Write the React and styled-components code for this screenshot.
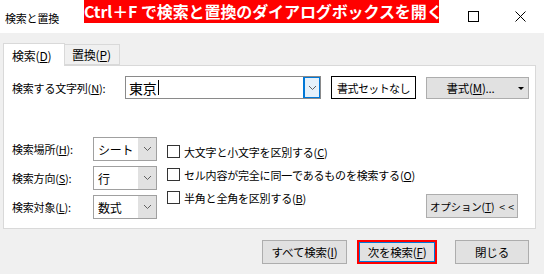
import { Fragment } from "react";
import styled, { createGlobalStyle } from "styled-components";

const GlobalStyle = createGlobalStyle`
  body {
    margin: 0;
    background: #f0f0f0;
    font-family: "Noto Sans CJK JP", "Noto Sans", sans-serif;
    color: #000;
  }
`;

const Window = styled.div`
  width: 544px;
  height: 274px;
  display: flex;
  flex-direction: column;
  background: #f0f0f0;
  font-size: 11px;
  letter-spacing: -0.2px;
  overflow: hidden;
`;

const TitleBar = styled.div`
  height: 33px;
  background: #fff;
  display: flex;
  align-items: center;
  padding-left: 5px;
`;

const Title = styled.div`
  font-size: 11px;
  padding-top: 2px;
`;

const Banner = styled.div`
  align-self: flex-start;
  margin-left: 25px;
  height: 23px;
  width: 355px;
  background: #ff0000;
  color: #fff;
  font-weight: bold;
  font-size: 16px;
  line-height: 23px;
  text-align: center;
  white-space: nowrap;
  letter-spacing: -0.1px;
`;

const Controls = styled.div`
  margin-left: auto;
  display: flex;
  align-items: center;
  gap: 36px;
  padding-right: 18px;
`;

const Body = styled.div`
  padding: 9px 8px 0 3px;
  display: flex;
  flex-direction: column;
`;

const Tabs = styled.div`
  display: flex;
  align-items: flex-end;
  height: 23px;
`;

const Tab = styled.div`
  height: ${(p) => (p.$active ? "23px" : "21px")};
  padding: 0 ${(p) => (p.$active ? "8px" : "7px")};
  width: ${(p) => p.$w}px;
  box-sizing: border-box;
  background: ${(p) => (p.$active ? "#fff" : "#f0f0f0")};
  border: 1px solid #d9d9d9;
  border-bottom: ${(p) => (p.$active ? "none" : "1px solid #d9d9d9")};
  border-left: ${(p) => (p.$active ? "1px solid #d9d9d9" : "none")};
  display: flex;
  align-items: center;
  position: relative;
  z-index: ${(p) => (p.$active ? 1 : 0)};
  margin-bottom: ${(p) => (p.$active ? "-1px" : "0")};
  font-size: 12px;
`;

const Panel = styled.div`
  height: 164px;
  box-sizing: border-box;
  border: 1px solid #d9d9d9;
  background: #fff;
  padding: 10px 1px 9px 8px;
  display: flex;
  flex-direction: column;
`;

const Row = styled.div`
  display: flex;
  align-items: center;
  height: 23px;
`;

const Label = styled.span`
  width: ${(p) => p.$w}px;
  white-space: nowrap;
  flex-shrink: 0;
`;

const Combo = styled.div`
  width: ${(p) => p.$w}px;
  height: ${(p) => p.$h}px;
  box-sizing: border-box;
  border: 1px solid ${(p) => p.$border || "#a0a0a0"};
  display: flex;
  background: #fff;
  flex-shrink: 0;
`;

const ComboText = styled.div`
  flex: 1;
  display: flex;
  align-items: center;
  padding-left: ${(p) => p.$pad || 4}px;
  font-size: ${(p) => p.$size || 12}px;
`;

const Caret = styled.span`
  display: inline-block;
  width: 1px;
  height: 15px;
  background: #000;
  margin-left: 1px;
`;

const DropBtn = styled.div`
  width: ${(p) => p.$w}px;
  display: flex;
  align-items: center;
  justify-content: center;
  background: ${(p) => (p.$focus ? "#e5f1fb" : "#e1e1e1")};
  border-left: 1px solid ${(p) => (p.$focus ? "#0078d7" : "#e1e1e1")};
  box-shadow: ${(p) => (p.$focus ? "inset 0 0 0 1px #0078d7" : "none")};
`;

const Button = styled.div`
  width: ${(p) => p.$w}px;
  height: ${(p) => p.$h || 24}px;
  box-sizing: border-box;
  margin-left: ${(p) => p.$ml || 0}px;
  border: 1px solid #adadad;
  background: #e1e1e1;
  display: flex;
  align-items: center;
  justify-content: center;
  white-space: nowrap;
  flex-shrink: 0;
  position: relative;
  font-size: ${(p) => p.$size || 11.5}px;
`;

const PlainButton = styled(Button)`
  border: 1px solid #000;
  background: #fff;
  letter-spacing: -0.6px;
`;

const HighlightButton = styled(Button)`
  border: 2px solid #ff0000;
  box-shadow: inset 0 0 0 1px #0078d7;
`;

const SmallArrow = styled.span`
  position: absolute;
  right: 4px;
  top: 9px;
  width: 0;
  height: 0;
  border-left: 3px solid transparent;
  border-right: 3px solid transparent;
  border-top: 3px solid #000;
`;

const Lower = styled.div`
  margin-top: 38px;
  display: flex;
  align-items: flex-start;
`;

const FieldGrid = styled.div`
  display: grid;
  grid-template-columns: 81px 64px;
  row-gap: 5px;
  align-items: center;
`;

const Checks = styled.div`
  margin-left: 10px;
  margin-top: 3px;
  display: flex;
  flex-direction: column;
`;

const CheckRow = styled.label`
  display: flex;
  align-items: center;
  height: 23px;
  gap: 4px;
  white-space: nowrap;
`;

const Box = styled.span`
  width: 13px;
  height: 13px;
  box-sizing: border-box;
  border: 1px solid #333;
  background: #fff;
`;

const OptionsWrap = styled.div`
  margin-left: auto;
  align-self: flex-end;
  margin-right: 16px;
  margin-bottom: 1px;
`;

const Collapse = styled.span`
  margin-left: ${(p) => p.$ml}px;
  letter-spacing: 0;
`;

const Footer = styled.div`
  display: flex;
  justify-content: flex-end;
  margin-top: 11px;
  padding-right: 7px;
`;

const Chevron = () => (
  <svg width="9" height="6" viewBox="0 0 9 6">
    <polyline points="1,1 4.5,4.5 8,1" fill="none" stroke="#606060" strokeWidth="1" />
  </svg>
);

const fields = [
  { label: "検索場所", key: "H", value: "シート" },
  { label: "検索方向", key: "S", value: "行" },
  { label: "検索対象", key: "L", value: "数式" },
];

const checks = [
  { text: "大文字と小文字を区別する", key: "C" },
  { text: "セル内容が完全に同一であるものを検索する", key: "O" },
  { text: "半角と全角を区別する", key: "B" },
];

export default function App() {
  return (
    <>
      <GlobalStyle />
      <Window>
        <TitleBar>
          <Title>検索と置換</Title>
          <Banner>Ctrl＋F で検索と置換のダイアログボックスを開く</Banner>
          <Controls>
            <svg width="11" height="11" viewBox="0 0 11 11">
              <rect x="0.5" y="0.5" width="10" height="10" fill="none" stroke="#000" />
            </svg>
            <svg width="11" height="11" viewBox="0 0 11 11">
              <path d="M0.5 0.5 L10.5 10.5 M10.5 0.5 L0.5 10.5" stroke="#000" strokeWidth="1" />
            </svg>
          </Controls>
        </TitleBar>
        <Body>
          <Tabs>
            <Tab $active $w={62}>
              検索(<u>D</u>)
            </Tab>
            <Tab $w={55}>
              置換(<u>P</u>)
            </Tab>
          </Tabs>
          <Panel>
            <Row>
              <Label $w={113}>
                検索する文字列(<u>N</u>):
              </Label>
              <Combo $w={196} $h={23} $border="#8a8a8a">
                <ComboText $pad={3} $size={14}>
                  東京
                  <Caret />
                </ComboText>
                <DropBtn $w={16} $focus>
                  <Chevron />
                </DropBtn>
              </Combo>
              <PlainButton $w={85} $h={23} $ml={10} $size={11}>
                書式セットなし
              </PlainButton>
              <Button $w={103} $h={22} $ml={10}>
                <span style={{ marginRight: 14 }}>
                  書式(<u>M</u>)...
                </span>
                <SmallArrow />
              </Button>
            </Row>
            <Lower>
              <FieldGrid>
                {fields.map((f) => (
                  <Fragment key={f.key}>
                    <Label $w={81}>
                      {f.label}(<u>{f.key}</u>):
                    </Label>
                    <Combo $w={64} $h={24}>
                      <ComboText $pad={4}>{f.value}</ComboText>
                      <DropBtn $w={17}>
                        <Chevron />
                      </DropBtn>
                    </Combo>
                  </Fragment>
                ))}
              </FieldGrid>
              <Checks>
                {checks.map((c) => (
                  <CheckRow key={c.key}>
                    <Box />
                    <span>
                      {c.text}(<u>{c.key}</u>)
                    </span>
                  </CheckRow>
                ))}
              </Checks>
              <OptionsWrap>
                <Button $w={92} $h={24} $size={10.5}>
                  <span>
                    オプション(<u>T</u>)
                  </span>
                  <Collapse $ml={5}>&lt;</Collapse>
                  <Collapse $ml={3}>&lt;</Collapse>
                </Button>
              </OptionsWrap>
            </Lower>
          </Panel>
          <Footer>
            <Button $w={85}>
              すべて検索(<u>I</u>)
            </Button>
            <HighlightButton $w={80} $ml={10}>
              次を検索(<u>F</u>)
            </HighlightButton>
            <Button $w={74} $ml={18}>
              閉じる
            </Button>
          </Footer>
        </Body>
      </Window>
    </>
  );
}
